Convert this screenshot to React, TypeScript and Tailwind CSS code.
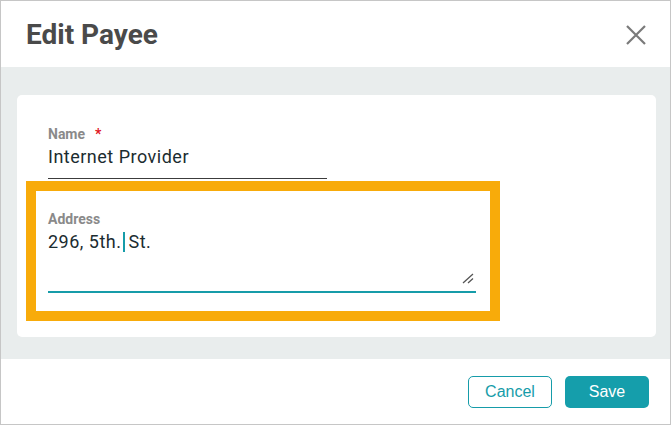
import React from 'react';

const CloseIcon = () => (
  <svg width="22" height="22" viewBox="0 0 22 22" className="block">
    <path d="M2 2 L20 20 M20 2 L2 20" stroke="#7a7a7a" strokeWidth="2.2" strokeLinecap="butt" />
  </svg>
);

const ResizeGrip = () => (
  <svg width="12" height="11" viewBox="0 0 12 11" className="block">
    <path d="M1 10 L11 1 M6 10 L11 5.5" stroke="#555" strokeWidth="1.3" />
  </svg>
);

const EditPayee = () => {
  return (
    <div className="w-[671px] h-[425px] border border-[#c6c6c6] bg-white flex flex-col font-['Roboto','Noto_Sans',sans-serif]">
      <div className="h-[66px] flex items-center justify-between pl-[25px] pr-[23px] pt-[1px]">
        <h1 className="text-[28px] leading-[32px] font-bold text-[#4a4a4a]">Edit Payee</h1>
        <button className="p-0">
          <CloseIcon />
        </button>
      </div>

      <div className="h-[292px] bg-[#e9eded] pt-[28px] pl-[16px] pr-[14px]">
        <div className="h-[242px] bg-white rounded-[5px] pt-[31px] pl-[31px]">
          <div className="w-[279px] border-b border-[#3c3c3c] pb-[9px]">
            <div className="flex items-center text-[14px] leading-[17px] font-bold text-[#8a8a8a]">
              Name
              <span className="ml-[10px] text-[#e0141e]">*</span>
            </div>
            <div className="mt-[2px] text-[18px] leading-[24px] tracking-[0.5px] text-[#1b2c30]">Internet Provider</div>
          </div>

          <div className="relative mt-[32px] w-[428px]">
            <div className="absolute -left-[22px] -top-[30px] w-[474px] h-[140px] border-[10px] border-[#f8ab0a] pointer-events-none" />
            <div className="text-[14px] leading-[17px] font-bold text-[#8a8a8a]">Address</div>
            <div className="relative mt-[2px] h-[63px] border-b-2 border-[#169ca9]">
              <div className="text-[18px] leading-[24px] tracking-[0.5px] text-[#1b2c30] flex items-center">
                <span>296, 5th.</span>
                <span className="inline-block w-[2px] h-[20px] bg-[#169ca9] ml-[1px] mr-[4px]" />
                <span>St.</span>
              </div>
              <div className="absolute right-[2px] bottom-[7px]">
                <ResizeGrip />
              </div>
            </div>
          </div>
        </div>
      </div>

      <div className="flex-1 flex justify-end items-start gap-[13px] pt-[17px] pr-[21px] font-['Liberation_Sans',Arial,sans-serif]">
        <button className="w-[84px] h-[32px] rounded-[5px] border border-[#169ca9] text-[#169ca9] text-[16px]">
          Cancel
        </button>
        <button className="w-[84px] h-[32px] rounded-[5px] bg-[#159eab] text-white text-[16px]">
          Save
        </button>
      </div>
    </div>
  );
};

export default function App() {
  return <EditPayee />;
}
